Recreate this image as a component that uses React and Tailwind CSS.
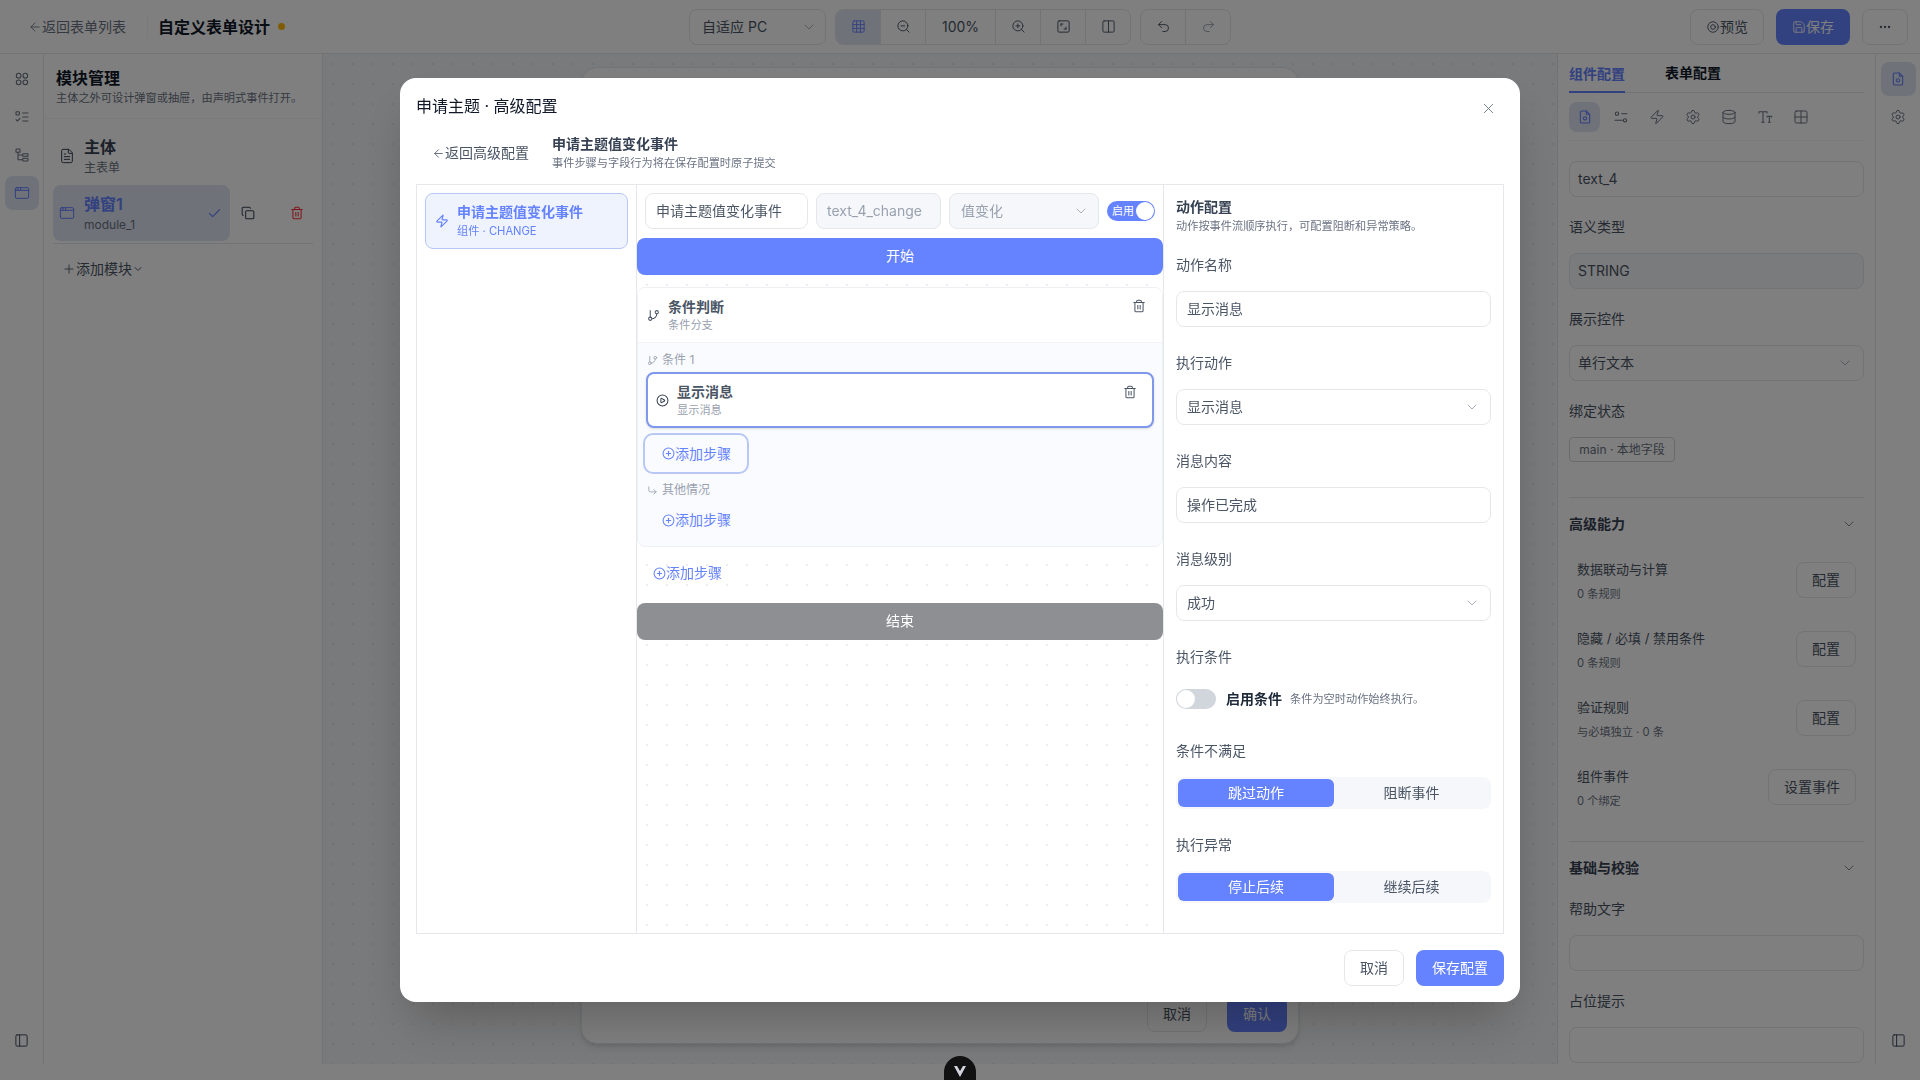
import {
  ArrowLeft, ChevronDown, ZoomIn, ZoomOut, Columns2, Undo2, Redo2, Save, Ellipsis, Grid3x3,
  Check, Copy, Trash2, Plus, Zap, GitBranch, CirclePlay, CirclePlus, CornerDownRight, X, Settings, Database,
  Grid2x2, PanelLeft, AppWindow, FileText,
} from 'lucide-react';

const FONT = "font-['Inter','Noto_Sans_CJK_SC',sans-serif]";

function Svg({ size = 16, className = '', children }) {
  return (
    <svg width={size} height={size} viewBox="0 0 24 24" fill="none" stroke="currentColor" strokeWidth="1.6" strokeLinecap="round" strokeLinejoin="round" className={className}>
      {children}
    </svg>
  );
}

function FourCircles(props) {
  return (
    <Svg {...props}>
      <circle cx="7" cy="7" r="3.5" />
      <circle cx="17" cy="7" r="3.5" />
      <circle cx="7" cy="17" r="3.5" />
      <circle cx="17" cy="17" r="3.5" />
    </Svg>
  );
}

function ChecksList(props) {
  return (
    <Svg {...props}>
      <rect x="3" y="4" width="5" height="5" rx="1" />
      <path d="M3 16l2 2 4-4M13 6h8M13 12h8M13 18h8" />
    </Svg>
  );
}

function TreeIcon(props) {
  return (
    <Svg {...props}>
      <rect x="3" y="3" width="6" height="5" rx="1" />
      <rect x="13" y="10" width="8" height="4" rx="1" />
      <rect x="13" y="17" width="8" height="4" rx="1" />
      <path d="M6 8v11h7M6 12h7" />
    </Svg>
  );
}

function FileGear(props) {
  return (
    <Svg {...props}>
      <path d="M14 3H7a2 2 0 0 0-2 2v14a2 2 0 0 0 2 2h10a2 2 0 0 0 2-2V8z" />
      <path d="M14 3v5h5" />
      <circle cx="12" cy="14" r="2.5" />
    </Svg>
  );
}

function SlidersIcon(props) {
  return (
    <Svg {...props}>
      <circle cx="6" cy="7" r="2.5" />
      <circle cx="18" cy="17" r="2.5" />
      <path d="M13 7h8M3 17h11" />
    </Svg>
  );
}

function ScaleBox(props) {
  return (
    <Svg {...props}>
      <rect x="3" y="3" width="18" height="18" rx="2" />
      <path d="M8 8h3M8 8v3M16 16h-3M16 16v-3" />
    </Svg>
  );
}

function EyeRing(props) {
  return (
    <Svg {...props}>
      <circle cx="12" cy="12" r="9" />
      <circle cx="12" cy="12" r="4" />
    </Svg>
  );
}

function TextSize(props) {
  return (
    <Svg {...props}>
      <path d="M3 6V4h12v2M9 4v16M7 20h4M15 12v-1h7v1M18.5 11v9M17 20h3" />
    </Svg>
  );
}

function Divider({ className = '' }) {
  return <div className={`h-px bg-gray-200 ${className}`} />;
}

function TopBar() {
  return (
    <header className="h-[54px] shrink-0 flex items-center border-b border-gray-200 bg-white">
      <div className="w-[148px] pl-7 flex items-center text-sm text-gray-500 border-r border-gray-100 h-6">
        <ArrowLeft size={14} strokeWidth={1.5} />
        <span>返回表单列表</span>
      </div>
      <span className="ml-[10px] text-base font-semibold text-gray-900">自定义表单设计</span>
      <span className="ml-2 w-[7px] h-[7px] rounded-full bg-amber-400" />

      <div className="ml-[404px] w-[137px] h-[36px] pl-3 pr-2 flex items-center justify-between border border-gray-200 rounded-lg text-sm text-gray-600">
        <span>自适应 PC</span>
        <ChevronDown size={16} strokeWidth={1.25} className="text-gray-400" />
      </div>

      <div className="ml-[9px] flex h-[36px] border border-gray-200 rounded-lg text-gray-600 overflow-hidden">
        <div className="w-[45px] flex items-center justify-center bg-[#dfe4f2] text-[#6582ff] border-r border-gray-200"><Grid3x3 size={15} strokeWidth={1.5} /></div>
        <div className="w-[45px] flex items-center justify-center border-r border-gray-200"><ZoomOut size={15} strokeWidth={1.5} /></div>
        <div className="w-[70px] flex items-center justify-center border-r border-gray-200 text-sm">100%</div>
        <div className="w-[45px] flex items-center justify-center border-r border-gray-200"><ZoomIn size={15} strokeWidth={1.5} /></div>
        <div className="w-[45px] flex items-center justify-center border-r border-gray-200"><ScaleBox size={15} /></div>
        <div className="w-[44px] flex items-center justify-center"><Columns2 size={15} strokeWidth={1.5} /></div>
      </div>

      <div className="ml-[9px] flex h-[36px] border border-gray-200 rounded-lg text-gray-600">
        <div className="w-[45px] flex items-center justify-center border-r border-gray-200"><Undo2 size={15} strokeWidth={1.5} /></div>
        <div className="w-[44px] flex items-center justify-center text-gray-400"><Redo2 size={15} strokeWidth={1.5} /></div>
      </div>

      <div className="ml-auto mr-3 flex items-center gap-3">
        <div className="w-[74px] h-[36px] flex items-center justify-center border border-gray-200 rounded-lg text-sm text-gray-600">
          <EyeRing size={14} />
          <span>预览</span>
        </div>
        <div className="w-[74px] h-[36px] flex items-center justify-center rounded-lg bg-[#6582ff] text-sm text-white">
          <Save size={14} strokeWidth={1.5} />
          <span>保存</span>
        </div>
        <div className="w-[46px] h-[36px] flex items-center justify-center border border-gray-200 rounded-lg text-gray-600">
          <Ellipsis size={14} />
        </div>
      </div>
    </header>
  );
}

function LeftRail() {
  return (
    <aside className="w-[44px] shrink-0 border-r border-gray-200 bg-white flex flex-col items-center pt-2 text-gray-500">
      <div className="w-[34px] h-[34px] flex items-center justify-center"><FourCircles size={16} /></div>
      <div className="mt-1 w-[34px] h-[34px] flex items-center justify-center"><ChecksList size={16} /></div>
      <div className="mt-1 w-[34px] h-[34px] flex items-center justify-center"><TreeIcon size={16} /></div>
      <div className="mt-1 w-[34px] h-[34px] rounded-lg flex items-center justify-center bg-[#dfe4f2] text-[#6582ff]"><AppWindow size={16} strokeWidth={1.5} /></div>
      <div className="mt-auto mb-4 text-gray-700"><PanelLeft size={15} strokeWidth={1.5} /></div>
    </aside>
  );
}

function ModulePanel() {
  return (
    <aside className="w-[279px] shrink-0 border-r border-gray-200 bg-white flex flex-col">
      <div className="h-[65px] pl-3 pt-[13px] border-b border-gray-100">
        <div className="text-base font-semibold text-gray-900 leading-[22px]">模块管理</div>
        <div className="text-[11.2px] text-gray-500 leading-[18px] whitespace-nowrap">主体之外可设计弹窗或抽屉，由声明式事件打开。</div>
      </div>
      <div className="mt-[12px] ml-[9px] h-[50px] pl-[6px] flex items-center gap-[9px]">
        <FileText size={16} strokeWidth={1.5} className="text-gray-700" />
        <div>
          <div className="text-base font-semibold text-gray-700 leading-[24px]">主体</div>
          <div className="text-xs text-gray-500 leading-[18px]">主表单</div>
        </div>
      </div>
      <div className="mt-[4px] ml-[9px] flex items-center">
        <div className="w-[177px] h-[56px] pl-[6px] pr-2 rounded-lg bg-[#dfe4f2] flex items-center gap-[9px] text-[#6582ff]">
          <AppWindow size={16} strokeWidth={1.5} />
          <div className="flex-1">
            <div className="text-base font-semibold leading-[24px]">弹窗1</div>
            <div className="text-xs text-gray-500 leading-[18px]">module_1</div>
          </div>
          <Check size={15} strokeWidth={1.75} />
        </div>
        <Copy size={14} strokeWidth={1.75} className="ml-[11px] text-gray-700" />
        <Trash2 size={14} strokeWidth={1.75} className="ml-[35px] text-red-500" />
      </div>
      <Divider className="mt-[2px] mx-[9px] bg-gray-100" />
      <div className="mt-[15px] pl-[18px] flex items-center text-sm text-gray-600">
        <Plus size={14} strokeWidth={1.5} />
        <span>添加模块</span>
        <ChevronDown size={12} />
      </div>
    </aside>
  );
}

function Canvas() {
  return (
    <main className="flex-1 bg-gray-100 flex justify-center pt-[13px] px-[257px] bg-[radial-gradient(#e3e5e9_1px,transparent_1px)] bg-[size:20px_20px]">
      <div className="w-[718px] h-[977px] rounded-2xl bg-white shadow-md border border-gray-200 flex items-end justify-end gap-5 p-[11px] pr-[11px]">
        <div className="w-[60px] h-[36px] rounded-lg border border-gray-200 flex items-center justify-center text-sm text-gray-600">取消</div>
        <div className="w-[60px] h-[36px] rounded-lg bg-[#6582ff] flex items-center justify-center text-sm text-white">确认</div>
      </div>
    </main>
  );
}

function PropLabel({ children, className = '' }) {
  return <div className={`text-sm text-gray-600 leading-[22px] ${className}`}>{children}</div>;
}

function PropBox({ children, className = '' }) {
  return <div className={`h-[36px] rounded-lg border border-gray-200 pl-2 pr-[10px] flex items-center justify-between text-sm text-gray-600 ${className}`}>{children}</div>;
}

const ADVANCED = [
  { title: '数据联动与计算', sub: '0 条规则', btn: '配置' },
  { title: '隐藏 / 必填 / 禁用条件', sub: '0 条规则', btn: '配置' },
  { title: '验证规则', sub: '与必填独立 · 0 条', btn: '配置' },
  { title: '组件事件', sub: '0 个绑定', btn: '设置事件' },
];

function PropsPanel() {
  return (
    <aside className="w-[319px] shrink-0 border-x border-gray-200 bg-white pl-[11px] pr-[11px] overflow-hidden">
      <div className="h-[39px] flex items-end gap-10 border-b border-gray-200 text-sm font-semibold">
        <div className="w-[56px] h-[39px] pt-[10px] text-[#6582ff] border-b-2 border-[#6582ff] -mb-px whitespace-nowrap">组件配置</div>
        <div className="h-[39px] pt-[10px] text-gray-900 whitespace-nowrap">表单配置</div>
      </div>
      <div className="h-[48px] flex items-center gap-[5px] border-b border-gray-100 text-gray-500">
        <div className="w-[31px] h-[30px] rounded-lg bg-[#dfe4f2] text-[#6582ff] flex items-center justify-center"><FileGear size={16} /></div>
        {[SlidersIcon, Zap, Settings, Database, TextSize, Grid2x2].map((Icon, i) => (
          <div key={i} className="w-[31px] h-[30px] flex items-center justify-center"><Icon size={16} strokeWidth={1.5} /></div>
        ))}
      </div>
      <PropBox className="mt-5">text_4</PropBox>
      <PropLabel className="mt-[19px]">语义类型</PropLabel>
      <PropBox className="mt-[15px] bg-[#f5f6f8] text-gray-400">STRING</PropBox>
      <PropLabel className="mt-[19px]">展示控件</PropLabel>
      <PropBox className="mt-[15px]">
        <span>单行文本</span>
        <ChevronDown size={16} strokeWidth={1.25} className="text-gray-400" />
      </PropBox>
      <PropLabel className="mt-[19px]">绑定状态</PropLabel>
      <div className="mt-[15px] w-[106px] h-[25px] rounded border border-gray-300 flex items-center justify-center text-xs text-gray-500 whitespace-nowrap">main · 本地字段</div>
      <Divider className="mt-[35px] bg-gray-100" />
      <div className="mt-4 h-[20px] flex items-center justify-between pr-[7px] text-sm font-semibold text-gray-700">
        <span>高级能力</span>
        <ChevronDown size={16} strokeWidth={1.25} className="text-gray-500" />
      </div>
      <div className="mt-[27px] pl-2 pr-2">
        {ADVANCED.map((row) => (
          <div key={row.title} className="h-[69px] flex justify-between">
            <div>
              <div className="text-[13px] text-gray-600 leading-[20px] -mt-[2px]">{row.title}</div>
              <div className="text-[11.2px] text-gray-500 leading-[18px] mt-[6px]">{row.sub}</div>
            </div>
            <div className={`${row.btn === '配置' ? 'w-[60px]' : 'w-[88px]'} h-[36px] mt-[1px] rounded-lg border border-gray-200 flex items-center justify-center text-sm text-gray-600`}>{row.btn}</div>
          </div>
        ))}
      </div>
      <Divider className="mt-[4px] bg-gray-100" />
      <div className="mt-4 h-[20px] flex items-center justify-between pr-[7px] text-sm font-semibold text-gray-700">
        <span>基础与校验</span>
        <ChevronDown size={16} strokeWidth={1.25} className="text-gray-500" />
      </div>
      <PropLabel className="mt-[20px]">帮助文字</PropLabel>
      <PropBox className="mt-[15px]" />
      <PropLabel className="mt-[19px]">占位提示</PropLabel>
      <PropBox className="mt-[15px]" />
    </aside>
  );
}

function RightRail() {
  return (
    <aside className="w-[44px] shrink-0 bg-white flex flex-col items-center pt-2 text-gray-500">
      <div className="w-[35px] h-[34px] rounded-lg bg-[#dfe4f2] text-[#6582ff] flex items-center justify-center"><FileGear size={16} /></div>
      <div className="mt-1 w-[35px] h-[34px] flex items-center justify-center"><Settings size={16} strokeWidth={1.5} /></div>
      <div className="mt-auto mb-4 text-gray-700"><PanelLeft size={15} strokeWidth={1.5} /></div>
    </aside>
  );
}

function Field({ label, select, value }) {
  return (
    <div className="h-[98px]">
      <div className="text-sm text-gray-600 leading-[22px]">{label}</div>
      <div className="mt-[15px] h-[36px] rounded-lg border border-gray-200 pl-[10px] pr-[10px] flex items-center justify-between text-sm text-gray-600">
        <span>{value}</span>
        {select && <ChevronDown size={16} strokeWidth={1.25} className="text-gray-400" />}
      </div>
    </div>
  );
}

function Segmented({ active, other }) {
  return (
    <div className="mt-[15px] h-[32px] rounded-lg bg-[#f5f7fa] p-[2px] flex text-sm">
      <div className="w-[156px] rounded-md bg-[#6582ff] text-white flex items-center justify-center">{active}</div>
      <div className="flex-1 text-gray-600 flex items-center justify-center">{other}</div>
    </div>
  );
}

function AddStep({ className = '' }) {
  return (
    <div className={`flex items-center text-sm text-[#6582ff] ${className}`}>
      <CirclePlus size={13} strokeWidth={1.9} />
      <span>添加步骤</span>
    </div>
  );
}

function FlowEditor() {
  return (
    <div className="w-[527px] shrink-0 border-r border-gray-200 flex flex-col">
      <div className="pt-2 pl-2 flex items-center gap-2">
        <div className="w-[163px] h-[36px] rounded-lg border border-gray-200 px-[10px] flex items-center text-sm text-gray-600 whitespace-nowrap">申请主题值变化事件</div>
        <div className="w-[125px] h-[36px] rounded-lg border border-gray-200 bg-[#f5f7fa] px-[10px] flex items-center text-sm text-gray-400">text_4_change</div>
        <div className="w-[150px] h-[36px] rounded-lg border border-gray-200 bg-[#f5f7fa] pl-[11px] pr-[9px] flex items-center justify-between text-sm text-gray-400">
          <span>值变化</span>
          <ChevronDown size={16} strokeWidth={1.25} />
        </div>
        <div className="w-[48px] h-[20px] rounded-full bg-[#6582ff] pl-[5px] pr-[1px] flex items-center justify-between">
          <span className="text-[11px] text-white">启用</span>
          <span className="w-[18px] h-[18px] rounded-full bg-white" />
        </div>
      </div>

      <div className="mt-[9px] h-[37px] pb-[1px] rounded-lg bg-[#6582ff] flex items-center justify-center text-sm text-white">开始</div>

      <div className="flex-1 flex flex-col bg-[radial-gradient(#eceef1_1px,transparent_1px)] bg-[size:20px_20px]">
        <div className="mt-3 h-[260px] rounded-lg border border-[#eef0f4] bg-[#f9fbff] overflow-hidden">
          <div className="h-[55px] bg-white border-b border-[#f1f3f7] pl-[9px] pr-[16px] flex items-center">
            <GitBranch size={13} strokeWidth={1.9} className="text-gray-600" />
            <div className="ml-[8px] flex-1">
              <div className="text-sm font-semibold text-gray-600 leading-[19px]">条件判断</div>
              <div className="text-[11.2px] text-gray-400 leading-[18px]">条件分支</div>
            </div>
            <Trash2 size={14} strokeWidth={1.75} className="text-gray-600 -mt-[18px]" />
          </div>
          <div className="px-2">
            <div className="mt-[8px] h-[18px] pl-[1px] flex items-center gap-[4px] text-xs text-gray-400">
              <GitBranch size={11} strokeWidth={1.9} />
              <span>条件 1</span>
            </div>
            <div className="mt-[3px] h-[56px] rounded-lg border-2 border-[#7f98ea] bg-white pl-[8px] pr-[15px] flex items-center shadow-sm">
              <CirclePlay size={13} strokeWidth={1.9} className="text-gray-700" />
              <div className="ml-[8px] flex-1">
                <div className="text-sm font-semibold text-gray-600 leading-[20px]">显示消息</div>
                <div className="text-[11.2px] text-gray-400 leading-[17px]">显示消息</div>
              </div>
              <Trash2 size={14} strokeWidth={1.75} className="text-gray-600 -mt-4" />
            </div>
            <AddStep className="mt-[5px] -ml-[3px] w-[106px] h-[41px] rounded-[10px] border-2 border-[#b9c7f5] pl-[17px]" />
            <div className="mt-[7px] h-[18px] pl-[1px] flex items-center gap-[4px] text-xs text-gray-400">
              <CornerDownRight size={11} strokeWidth={1.9} />
              <span>其他情况</span>
            </div>
            <AddStep className="mt-[11px] h-[20px] pl-[16px]" />
          </div>
        </div>
        <AddStep className="mt-[6px] h-[40px] pl-4" />
        <div className="mt-[10px] h-[37px] pb-[1px] rounded-lg bg-[#8e8f93] flex items-center justify-center text-sm text-white">结束</div>
      </div>
    </div>
  );
}

function ActionPanel() {
  return (
    <div className="flex-1 px-3 pt-[12px]">
      <div className="text-sm font-semibold text-gray-700 leading-[20px]">动作配置</div>
      <div className="text-[11.2px] text-gray-500 leading-[18px]">动作按事件流顺序执行，可配置阻断和异常策略。</div>
      <div className="mt-[19px]">
        <Field label="动作名称" value="显示消息" />
        <Field label="执行动作" value="显示消息" select />
        <Field label="消息内容" value="操作已完成" />
        <Field label="消息级别" value="成功" select />
      </div>
      <div className="text-sm text-gray-600 leading-[22px]">执行条件</div>
      <div className="mt-[21px] h-[20px] flex items-center">
        <span className="w-[40px] h-[20px] rounded-full bg-gray-300 p-[1px]">
          <span className="block w-[18px] h-[18px] rounded-full bg-white" />
        </span>
        <span className="ml-[10px] text-sm font-semibold text-gray-800">启用条件</span>
        <span className="ml-2 text-[11.2px] text-gray-500">条件为空时动作始终执行。</span>
      </div>
      <div className="mt-[31px] text-sm text-gray-600 leading-[22px]">条件不满足</div>
      <Segmented active="跳过动作" other="阻断事件" />
      <div className="mt-[25px] text-sm text-gray-600 leading-[22px]">执行异常</div>
      <Segmented active="停止后续" other="继续后续" />
    </div>
  );
}

function AdvancedModal() {
  return (
    <div className="fixed inset-0 z-10 bg-black/50 backdrop-blur-[0.5px] flex items-center justify-center">
      <div className="w-[1120px] h-[924px] rounded-2xl bg-white shadow-2xl flex flex-col">
        <div className="h-[56px] shrink-0 pl-4 pr-[23px] flex items-center justify-between">
          <span className="text-base text-gray-900">申请主题 · 高级配置</span>
          <X size={17} strokeWidth={1.25} className="text-gray-500 mt-[4px]" />
        </div>
        <div className="h-[38px] mb-3 shrink-0 pl-8 flex items-center">
          <div className="w-[120px] flex items-center text-sm text-gray-600">
            <ArrowLeft size={13} strokeWidth={1.5} />
            <span>返回高级配置</span>
          </div>
          <div>
            <div className="text-sm font-semibold text-gray-700 leading-[20px]">申请主题值变化事件</div>
            <div className="text-[11.2px] text-gray-500 leading-[18px]">事件步骤与字段行为将在保存配置时原子提交</div>
          </div>
        </div>
        <div className="mx-4 h-[750px] shrink-0 border border-gray-200 flex">
          <div className="w-[220px] shrink-0 border-r border-gray-200 p-2">
            <div className="h-[56px] rounded-lg border border-[#b8c7f5] bg-[#eef3fe] pl-[9px] flex items-center text-[#6582ff]">
              <Zap size={14} strokeWidth={1.9} />
              <div className="ml-[8px] -mt-[2px]">
                <div className="text-sm font-semibold leading-[21px]">申请主题值变化事件</div>
                <div className="text-[11.2px] leading-[18px]">组件 · CHANGE</div>
              </div>
            </div>
          </div>
          <FlowEditor />
          <ActionPanel />
        </div>
        <div className="px-4 pt-4 flex justify-end gap-3 text-sm">
          <div className="w-[60px] h-[36px] rounded-lg border border-gray-200 flex items-center justify-center text-gray-600">取消</div>
          <div className="w-[88px] h-[36px] rounded-lg bg-[#6582ff] flex items-center justify-center text-white">保存配置</div>
        </div>
      </div>
    </div>
  );
}

export default function App() {
  return (
    <div className={`relative h-screen w-screen overflow-hidden bg-white flex flex-col ${FONT}`}>
      <TopBar />
      <div className="h-[1010px] shrink-0 flex">
        <LeftRail />
        <ModulePanel />
        <Canvas />
        <PropsPanel />
        <RightRail />
      </div>
      <AdvancedModal />
      {/* devtools 버튼 */}
      <div className="fixed z-20 left-[944px] top-[1056px] w-[32px] h-[40px] rounded-full bg-[#111] flex justify-center pt-[10px]">
        <svg width="12" height="11" viewBox="0 0 12 11"><path d="M0 0h12L6 11z" fill="#d1d5db" /><path d="M3 0h6L6 5z" fill="#111" /></svg>
      </div>
    </div>
  );
}
